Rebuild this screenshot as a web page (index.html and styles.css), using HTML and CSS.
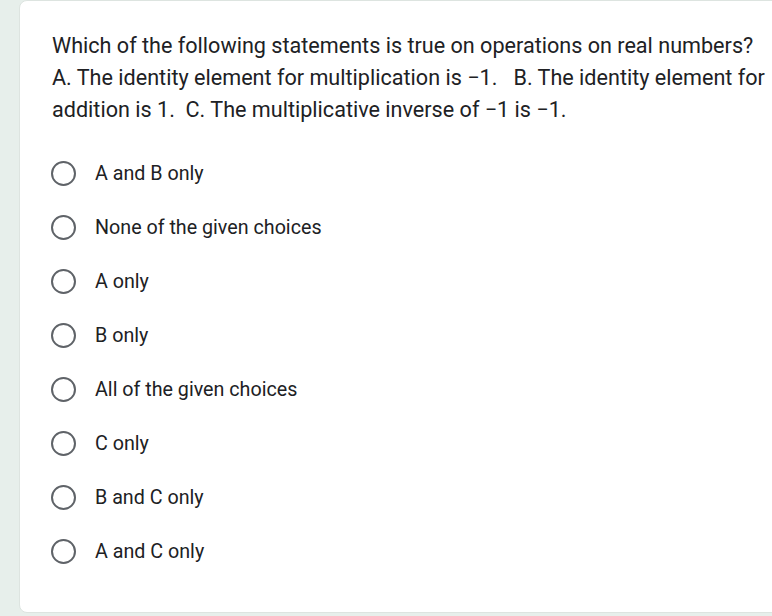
FILE: index.html
```html
<!DOCTYPE html>
<html>
<head>
<meta charset="utf-8">
<link rel="stylesheet" href="styles.css">
</head>
<body>
<div class="card">
  <div class="question">Which of the following statements is true on operations on real numbers?<br>A. The identity element for multiplication is &minus;1.&nbsp;&nbsp; B. The identity element for<br>addition is 1.&nbsp;&nbsp;C. The multiplicative inverse of &minus;1 is &minus;1.</div>
  <div class="options">
    <div class="option"><span class="radio"></span><span class="label">A and B only</span></div>
    <div class="option"><span class="radio"></span><span class="label">None of the given choices</span></div>
    <div class="option"><span class="radio"></span><span class="label">A only</span></div>
    <div class="option"><span class="radio"></span><span class="label">B only</span></div>
    <div class="option"><span class="radio"></span><span class="label">All of the given choices</span></div>
    <div class="option"><span class="radio"></span><span class="label">C only</span></div>
    <div class="option"><span class="radio"></span><span class="label">B and C only</span></div>
    <div class="option"><span class="radio"></span><span class="label">A and C only</span></div>
  </div>
</div>
</body>
</html>
```

FILE: styles.css
```css
html, body {
  margin: 0;
  padding: 0;
}
body {
  background: #e7efeb;
  font-family: Roboto, "Liberation Sans", sans-serif;
  color: #202124;
  width: 772px;
  height: 616px;
  overflow: hidden;
}
.card {
  margin-left: 19px;
  width: 780px;
  height: 613px;
  box-sizing: border-box;
  background: #fff;
  border-radius: 8px;
  border: 1px solid #dde4e0;
  padding: 29px 0 0 31px;
}
.question {
  font-size: 21.6px;
  line-height: 32px;
  white-space: nowrap;
  padding-left: 1px;
}
.options {
  margin-top: 35px;
  display: flex;
  flex-direction: column;
  gap: 29px;
}
.option {
  display: flex;
  align-items: center;
  height: 25px;
}
.radio {
  width: 21px;
  height: 21px;
  border: 2px solid #5f6368;
  border-radius: 50%;
  flex-shrink: 0;
}
.label {
  margin-left: 19px;
  font-size: 19.7px;
}
```
